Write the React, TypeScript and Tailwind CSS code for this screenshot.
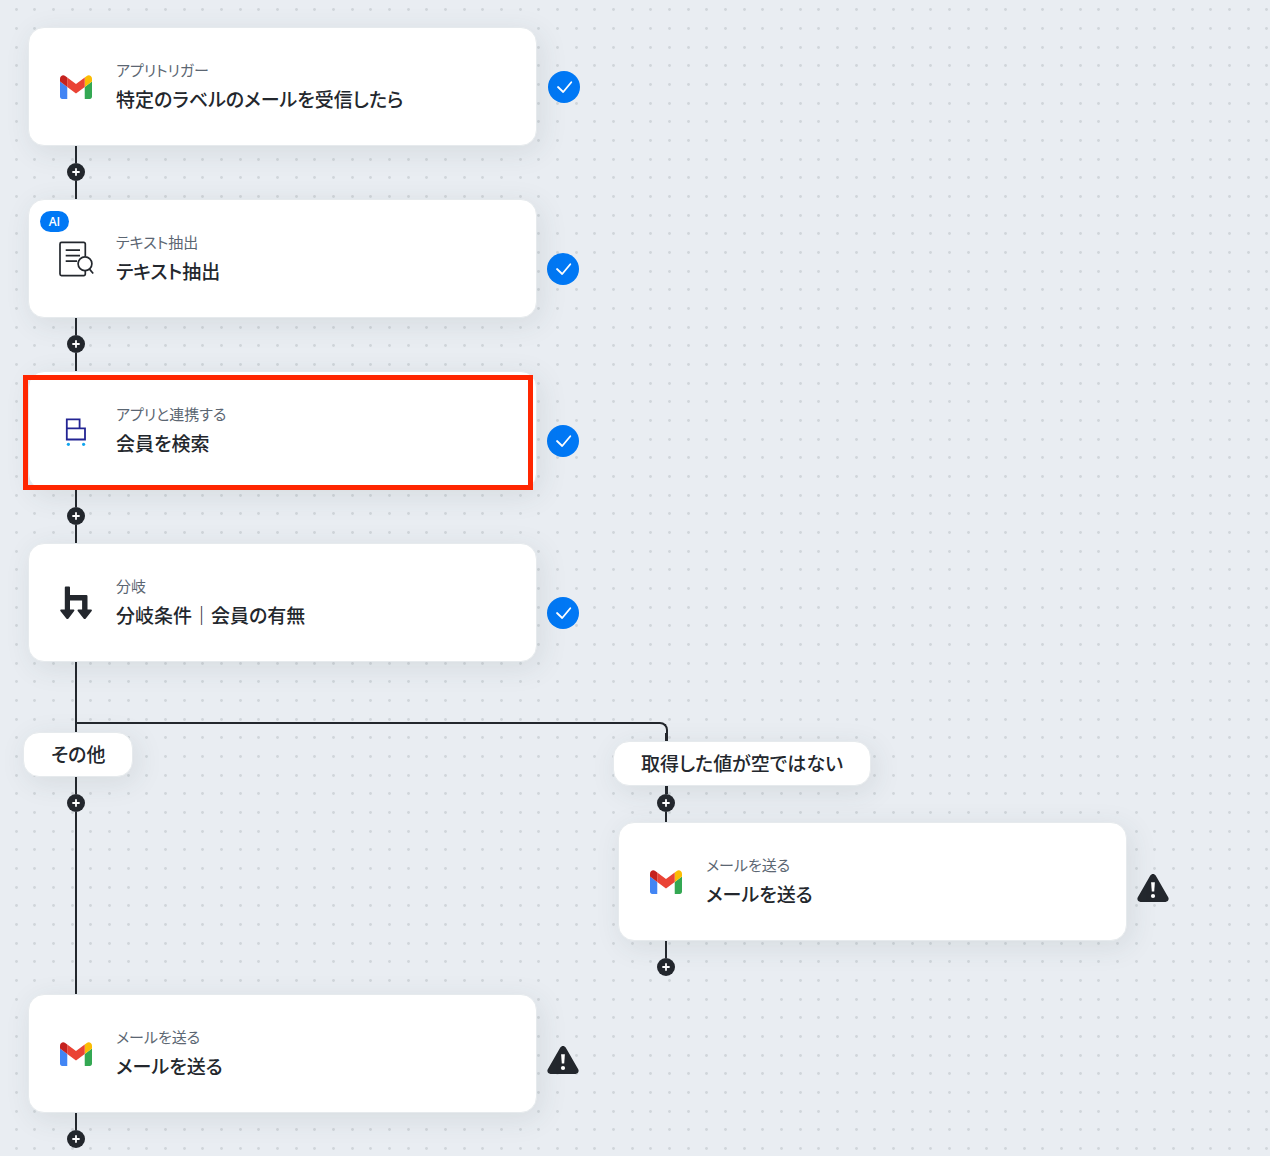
import { ReactNode } from "react";
import { clsx } from "clsx";

type StepStatus = "done" | "warning";

interface StepProps {
  icon: ReactNode;
  label: string;
  title: string;
  status: StepStatus;
  isTrigger?: boolean;
  isAi?: boolean;
  isHighlighted?: boolean;
}

const DOT_OFFSETS_X = [16, 34, 53];
const DOT_OFFSETS_Y = [9, 28, 47];

function DotGrid() {
  return (
    <svg className="absolute inset-0 size-full" aria-hidden="true">
      <defs>
        <pattern
          id="dots"
          width="56"
          height="56"
          patternUnits="userSpaceOnUse"
        >
          {DOT_OFFSETS_Y.map((y) =>
            DOT_OFFSETS_X.map((x) => (
              <circle
                key={`${x}-${y}`}
                cx={x + 0.5}
                cy={y + 0.5}
                r="1.4"
                fill="#d0d5da"
              />
            )),
          )}
        </pattern>
      </defs>
      <rect width="100%" height="100%" fill="url(#dots)" />
    </svg>
  );
}

function GmailIcon() {
  return (
    <svg className="h-6 w-8 shrink-0" viewBox="52 41 88 66" aria-hidden="true">
      <path fill="#4285f4" d="M58 107h14V74L52 59v42c0 3.32 2.69 6 6 6" />
      <path fill="#34a853" d="M120 107h14c3.32 0 6-2.69 6-6V59l-20 15" />
      <path
        fill="#fbbc04"
        d="M120 48v26l20-15v-8c0-7.42-8.47-11.65-14.4-7.2"
      />
      <path fill="#ea4335" d="M72 74V48l24 18 24-18v26L96 92" />
      <path
        fill="#c5221f"
        d="M52 51v8l20 15V48l-5.6-4.2c-5.94-4.45-14.4-.22-14.4 7.2"
      />
    </svg>
  );
}

function ExtractIcon() {
  return (
    <svg
      className="size-9 shrink-0"
      viewBox="0 0.5 36 36"
      fill="none"
      stroke="#23272d"
      strokeWidth="1.7"
      aria-hidden="true"
    >
      <path d="M27.3 15.8V3.4a1.5 1.5 0 0 0-1.5-1.5H3.5A1.5 1.5 0 0 0 2 3.4v30.2a1.5 1.5 0 0 0 1.5 1.5h22.3a1.5 1.5 0 0 0 1.5-1.5V30.2" />
      <path d="M7.7 9.7h14.3M7.7 15.2h14.3M7.7 20.7h11.3" />
      <circle cx="27" cy="23.2" r="6.9" />
      <path d="M31.5 28.6l3.7 4.4" />
    </svg>
  );
}

function MemberIcon() {
  return (
    <svg
      className="h-[30px] w-6 shrink-0"
      viewBox="0 0 24 30"
      fill="none"
      aria-hidden="true"
    >
      <path
        d="M2.8 3.3h12.8v9H2.8zM2.8 12.3h18.2v11.2H2.8z"
        stroke="#232493"
        strokeWidth="1.8"
      />
      <circle cx="4.4" cy="28.3" r="1.6" fill="#12a5ee" />
      <circle cx="19.6" cy="28.3" r="1.6" fill="#12a5ee" />
    </svg>
  );
}

function BranchIcon() {
  return (
    <svg
      className="h-[34px] w-8 shrink-0"
      viewBox="0 0.5 32 34"
      fill="#23272d"
      aria-hidden="true"
    >
      <path d="M5.8 1H9a1 1 0 0 1 1 1v7.5h16.3a1.2 1.2 0 0 1 1.2 1.2v13.4h3.2c1.2 0 1.5 1 .8 1.7l-5.7 7.2a1.5 1.5 0 0 1-2.2 0l-5.7-7.2c-.7-.8-.3-1.7.8-1.7h3.4v-9H10v9h3.200c1.200 0 1.500 1 .8 1.700L8.500 33a1.500 1.500 0 0 1-2.200 0L.6 25.800c-.7-.8-.3-1.700.8-1.700h3.400V2a1 1 0 0 1 1-1z" />
    </svg>
  );
}

function StatusMark({ status }: { status: StepStatus }) {
  if (status === "warning") {
    return (
      <svg
        className="h-7 w-8"
        viewBox="0 0 32 28"
        role="img"
        aria-label="未設定"
      >
        <path
          d="M13.3 1.6c1.2-2.1 4.2-2.1 5.4 0l12.5 21.6c1.2 2.1-.3 4.7-2.7 4.7h-25c-2.4 0-3.9-2.6-2.7-4.7z"
          fill="#23272d"
        />
        <path d="M14.1 8.2h3.8l-.7 9.4h-2.4z" fill="#fff" />
        <circle cx="16" cy="22" r="2.1" fill="#fff" />
      </svg>
    );
  }

  return (
    <svg
      className="size-8"
      viewBox="0 0 32 32"
      fill="none"
      role="img"
      aria-label="設定済み"
    >
      <circle cx="16" cy="16" r="16" fill="#0078f5" />
      <path
        d="M10 16l5.2 5L23.3 11.2"
        stroke="#fff"
        strokeWidth="1.8"
        strokeLinecap="round"
        strokeLinejoin="round"
      />
    </svg>
  );
}

function Step({
  icon,
  label,
  title,
  status,
  isTrigger,
  isAi,
  isHighlighted,
}: StepProps) {
  return (
    <div className="flex items-start gap-2.5 pl-[5px]">
      <article className="relative flex h-[119px] w-[509px] shrink-0 items-center gap-6 rounded-2xl border border-[#e6eaed] bg-white pl-[31px] shadow-[4px_6px_28px_rgba(50,70,70,0.1)]">
        {isAi && (
          <span className="absolute top-[11px] left-[11px] flex h-[21px] w-[29px] items-center justify-center rounded-full bg-[#0078f5] font-['Open_Sans',sans-serif] text-xs font-semibold text-white">
            AI
          </span>
        )}
        <div className="flex w-8 shrink-0 justify-center">{icon}</div>
        <div className="pb-px">
          <p className="text-[15px] leading-5 text-[#5b6672]">{label}</p>
          <h2 className="mt-[5px] text-[19px] leading-7 font-medium">
            {title}
          </h2>
        </div>
        {isHighlighted && (
          <div className="absolute top-[3px] -left-1.5 h-[115px] w-[510px] border-5 border-[#ff2600]" />
        )}
      </article>
      <div
        className={clsx(
          isTrigger && "pt-11 pl-px",
          !isTrigger && status === "done" && "pt-[54px]",
          status === "warning" && "pt-[52px]",
        )}
      >
        <StatusMark status={status} />
      </div>
    </div>
  );
}

function Line({ className }: { className: string }) {
  return <div className={clsx("ml-[52px] bg-[#23272d]", className)} />;
}

function AddButton() {
  return (
    <button
      type="button"
      aria-label="ステップを追加"
      className="ml-11 flex size-[18px] items-center justify-center rounded-full bg-[#23272d]"
    >
      <svg
        className="size-2"
        viewBox="0 0 8 8"
        stroke="#fff"
        strokeWidth="1.8"
        strokeLinecap="round"
        aria-hidden="true"
      >
        <path d="M4 1v6M1 4h6" />
      </svg>
    </button>
  );
}

function Connector() {
  return (
    <>
      <Line className="h-[17px] w-0.5" />
      <AddButton />
      <Line className="h-[18px] w-0.5" />
    </>
  );
}

function BranchLabel({ children }: { children: ReactNode }) {
  return (
    <div className="flex h-[45px] w-fit items-center rounded-2xl border border-[#e6eaed] bg-white px-[27px] pb-0.5 text-[19px] leading-7 font-medium whitespace-nowrap shadow-[4px_6px_28px_rgba(50,70,70,0.1)]">
      {children}
    </div>
  );
}

export default function App() {
  return (
    <main className="relative min-h-screen overflow-hidden bg-[#e9edf2] font-['Noto_Sans_CJK_JP',sans-serif] text-[#23272d] [font-feature-settings:'palt']">
      <DotGrid />
      <div className="relative pt-[27px] pb-2 pl-[23px]">
        <Step
          icon={<GmailIcon />}
          label="アプリトリガー"
          title="特定のラベルのメールを受信したら"
          status="done"
          isTrigger
        />
        <Connector />
        <Step
          icon={<ExtractIcon />}
          label="テキスト抽出"
          title="テキスト抽出"
          status="done"
          isAi
        />
        <Connector />
        <Step
          icon={<MemberIcon />}
          label="アプリと連携する"
          title="会員を検索"
          status="done"
          isHighlighted
        />
        <Connector />
        <Step
          icon={<BranchIcon />}
          label="分岐"
          title="分岐条件｜会員の有無"
          status="done"
        />

        <div className="flex items-start">
          <section className="w-[590px] shrink-0">
            <Line className="h-[70px] w-0.5" />
            <BranchLabel>その他</BranchLabel>
            <Line className="h-[17px] w-0.5" />
            <AddButton />
            <Line className="h-[182px] w-0.5" />
            <Step
              icon={<GmailIcon />}
              label="メールを送る"
              title="メールを送る"
              status="warning"
            />
            <Line className="h-[17px] w-0.5" />
            <AddButton />
          </section>

          <section className="shrink-0 pt-15">
            {/* runs back to the main rail */}
            <div className="-ml-[537px] h-[11px] w-[592px] rounded-tr-lg border-t-2 border-r-2 border-[#23272d]" />
            <Line className="h-2 w-[3px]" />
            <BranchLabel>取得した値が空ではない</BranchLabel>
            <Line className="h-2 w-[3px]" />
            <AddButton />
            <Line className="h-2.5 w-0.5" />
            <Step
              icon={<GmailIcon />}
              label="メールを送る"
              title="メールを送る"
              status="warning"
            />
            <Line className="h-[17px] w-0.5" />
            <AddButton />
          </section>
        </div>
      </div>
    </main>
  );
}
